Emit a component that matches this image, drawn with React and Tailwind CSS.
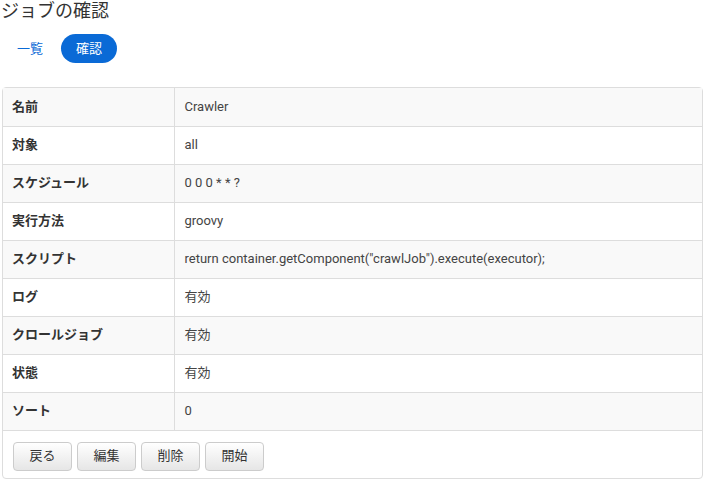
const rows = [
  ["名前", "Crawler"],
  ["対象", "all"],
  ["スケジュール", "0 0 0 * * ?"],
  ["実行方法", "groovy"],
  ["スクリプト", 'return container.getComponent("crawlJob").execute(executor);'],
  ["ログ", "有効"],
  ["クロールジョブ", "有効"],
  ["状態", "有効"],
  ["ソート", "0"],
];

const buttons = ["戻る", "編集", "削除", "開始"];

const App = () => {
  return (
    <div
      className="w-[705px] h-[481px] bg-white text-[#333] overflow-hidden"
      style={{ fontFamily: 'Roboto, "Noto Sans CJK JP", sans-serif' }}
    >
      <h1 className="text-[18px] leading-[22px] pl-[1px] text-[#333]">ジョブの確認</h1>
      <div className="flex items-center mt-[12px] ml-[3px] gap-[4px]">
        <a className="px-[14px] h-[29px] flex items-center text-[13px] text-[#0a6ad6]">一覧</a>
        <a className="w-[56px] h-[29px] flex items-center justify-center rounded-full bg-[#0a6ad6] text-white text-[13px] whitespace-nowrap">
          確認
        </a>
      </div>
      <div className="mx-[2px] mt-[24px] border border-[#ddd] rounded-[4px] w-[701px]">
        <table className="w-full border-collapse text-[13px]">
          <tbody>
            {rows.map(([label, value], i) => (
              <tr
                key={label}
                className={`h-[38px] border-b border-[#ddd] ${i % 2 === 0 ? "bg-[#f9f9f9]" : "bg-white"}`}
              >
                <th className="w-[171px] text-left font-bold pl-[9px] border-r border-[#ddd]">
                  {label}
                </th>
                <td className="pl-[10px] text-[#444]">{value}</td>
              </tr>
            ))}
          </tbody>
        </table>
        <div className="flex gap-[5px] px-[10px] pt-[11px] pb-[7px]">
          {buttons.map((b) => (
            <button
              key={b}
              className="w-[59px] h-[29px] border border-[#ccc] rounded-[4px] bg-gradient-to-b from-white to-[#e6e6e6] text-[13px] text-[#333]"
            >
              {b}
            </button>
          ))}
        </div>
      </div>
    </div>
  );
};

export default App;
